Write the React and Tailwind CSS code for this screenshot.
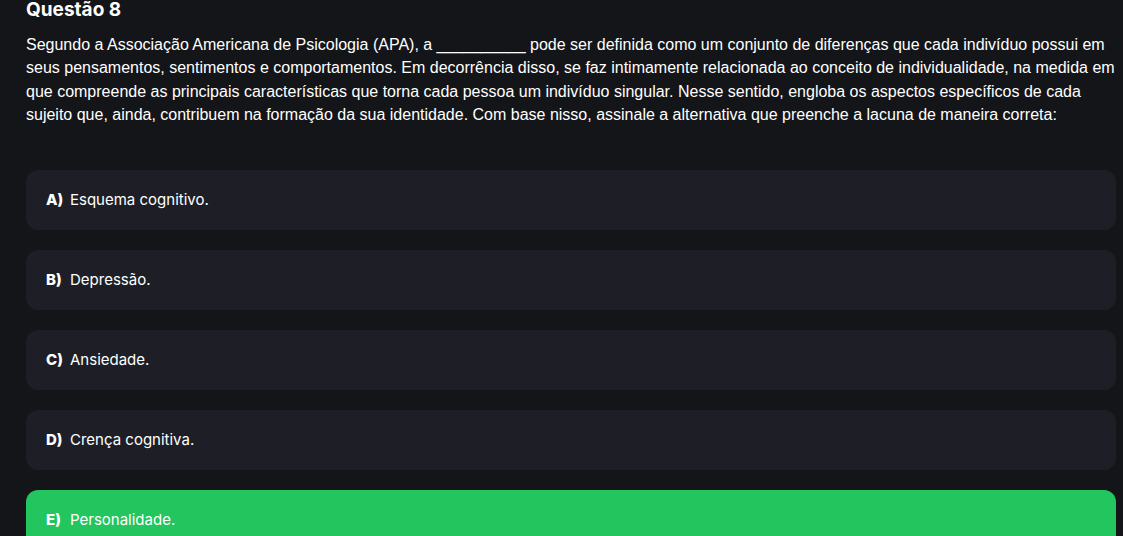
export default function App() {
  const opts = [
    ["A", "Esquema cognitivo."],
    ["B", "Depressão."],
    ["C", "Ansiedade."],
    ["D", "Crença cognitiva."],
    ["E", "Personalidade."],
  ];
  return (
    <div className="h-[536px] overflow-hidden bg-[#141519] pl-[26px] pr-[7px] text-white">
      <h2 className="text-[19px] font-bold leading-[19px] [font-family:Inter,'Liberation_Sans',sans-serif]">
        Questão 8
      </h2>
      <p className="mt-[14px] text-[16px] leading-[23.3px] text-white [font-family:'Liberation_Sans',Arial,sans-serif]">
        Segundo a Associação Americana de Psicologia (APA), a __________ pode ser definida como um conjunto de diferenças que cada indivíduo possui em seus pensamentos, sentimentos e comportamentos. Em decorrência disso, se faz intimamente relacionada ao conceito de individualidade, na medida em que compreende as principais características que torna cada pessoa um indivíduo singular. Nesse sentido, engloba os aspectos específicos de cada sujeito que, ainda, contribuem na formação da sua identidade. Com base nisso, assinale a alternativa que preenche a lacuna de maneira correta:
      </p>
      <div className="mt-[44px] flex flex-col gap-[20px]">
        {opts.map(([l, t]) => (
          <div
            key={l}
            className={
              l === "E"
                ? "flex h-[60px] items-center rounded-[12px] bg-[#22c55e] px-[20px] text-[15px] [font-family:Inter,sans-serif]"
                : "flex h-[60px] items-center rounded-[12px] bg-[#1e1f26] px-[20px] text-[15px] [font-family:Inter,sans-serif]"
            }
          >
            <span className="w-[24px] font-extrabold">{l})</span>
            <span>{t}</span>
          </div>
        ))}
      </div>
    </div>
  );
}
